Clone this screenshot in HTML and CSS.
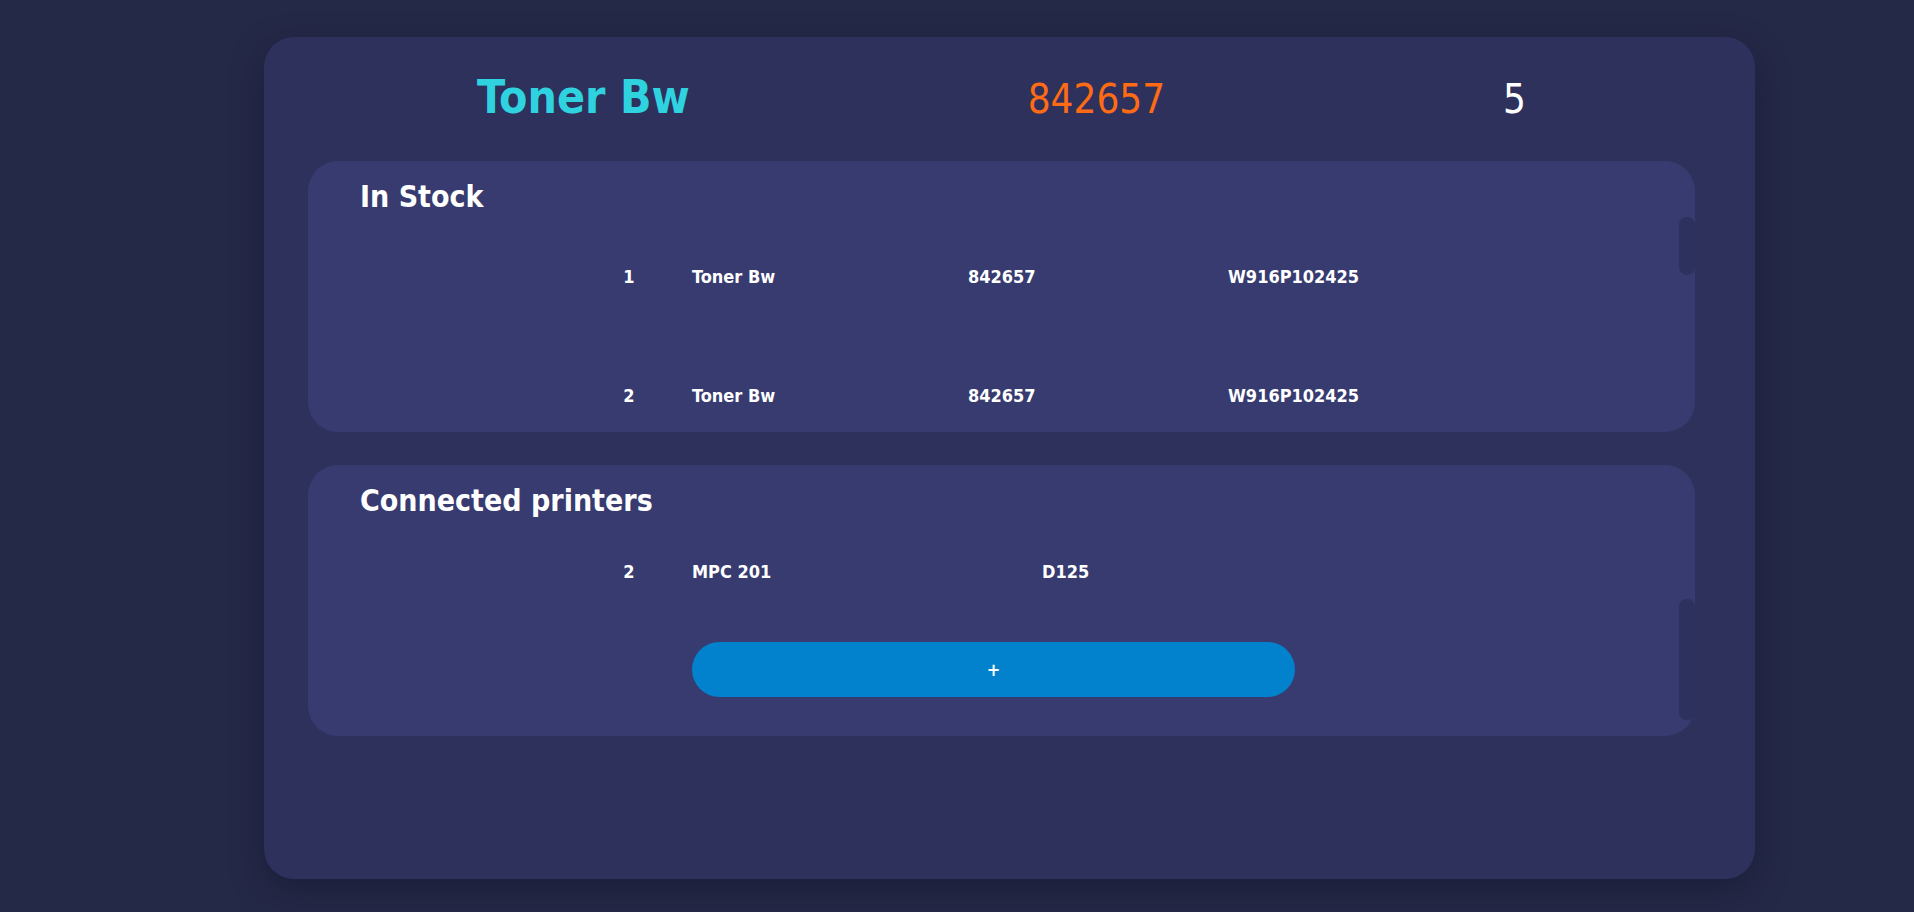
FILE: index.html
```html
<!DOCTYPE html>
<html lang="en">
<head>
<meta charset="utf-8">
<title>Toner Bw</title>
<link rel="stylesheet" href="styles.css">
</head>
<body>
<main class="card">
  <header class="head">
    <h1 class="name">Toner Bw</h1>
    <span class="code">842657</span>
    <span class="count">5</span>
  </header>

  <section class="panel">
    <h2 class="panel-title">In Stock</h2>
    <div class="list">
      <div class="row stock">
        <span class="idx">1</span><span>Toner Bw</span><span>842657</span><span>W916P102425</span>
      </div>
      <div class="row stock">
        <span class="idx">2</span><span>Toner Bw</span><span>842657</span><span>W916P102425</span>
      </div>
    </div>
    <div class="thumb thumb-stock" aria-hidden="true"></div>
  </section>

  <section class="panel">
    <h2 class="panel-title">Connected printers</h2>
    <div class="list">
      <div class="row printer">
        <span class="idx">2</span><span>MPC 201</span><span>D125</span>
      </div>
      <div class="add-row"><button class="add" type="button">+</button></div>
    </div>
    <div class="thumb thumb-printers" aria-hidden="true"></div>
  </section>
</main>
</body>
</html>
```

FILE: styles.css
```css
html, body {
  margin: 0;
  padding: 0;
}

body {
  background: #252948;
  font-family: "DejaVu Sans Condensed", "DejaVu Sans", sans-serif;
  font-stretch: condensed;
  min-height: 100vh;
  overflow: hidden;
}

.card {
  box-sizing: border-box;
  width: 1491px;
  height: 842px;
  margin: 37px 0 0 264px;
  padding: 33px 60px 0 44px;
  background: #2d315c;
  border-radius: 30px;
  box-shadow: 0 12px 34px rgba(10, 12, 30, 0.35);
}

.head {
  display: flex;
  justify-content: space-around;
  align-items: baseline;
}

.name {
  margin: 0;
  font-size: 46px;
  font-weight: 700;
  line-height: normal;
  color: #2fd3e0;
}

.code {
  font-size: 40px;
  font-weight: 400;
  color: #ff6b14;
}

.count {
  font-size: 40px;
  font-weight: 400;
  color: #ffffff;
}

.panel {
  position: relative;
  margin-top: 37px;
  padding: 18px 0 16px;
  background: #373b6f;
  border-radius: 30px;
}

.panel + .panel {
  margin-top: 33px;
}

.panel-title {
  margin: 0 0 3px 52px;
  font-size: 30px;
  font-weight: 700;
  line-height: normal;
  color: #ffffff;
}

.list {
  height: 199px;
  overflow: hidden;
}

.row {
  display: grid;
  height: 119px;
  align-items: center;
  padding-left: 301px;
  column-gap: 43px;
  font-size: 18px;
  font-weight: 700;
  color: #ffffff;
}

.stock {
  grid-template-columns: 40px 233px 217px auto;
}

.printer {
  height: 101px;
  grid-template-columns: 40px 307px auto;
}

.idx {
  text-align: center;
}

.add-row {
  padding: 20px 0 0 384px;
}

.add {
  display: block;
  width: 603px;
  height: 55px;
  border: 0;
  border-radius: 28px;
  background: #0281cc;
  color: #ffffff;
  font-family: "DejaVu Sans Condensed", "DejaVu Sans", sans-serif;
  font-stretch: condensed;
  font-size: 18px;
  font-weight: 700;
  cursor: pointer;
}

/* scrollbar thumbs drawn over the right edge of each panel */
.thumb {
  position: absolute;
  right: 0;
  width: 16px;
  background: #2d315d;
  border-radius: 8px;
}

.thumb-stock {
  top: 56px;
  height: 58px;
}

.thumb-printers {
  top: 134px;
  height: 121px;
}
```
